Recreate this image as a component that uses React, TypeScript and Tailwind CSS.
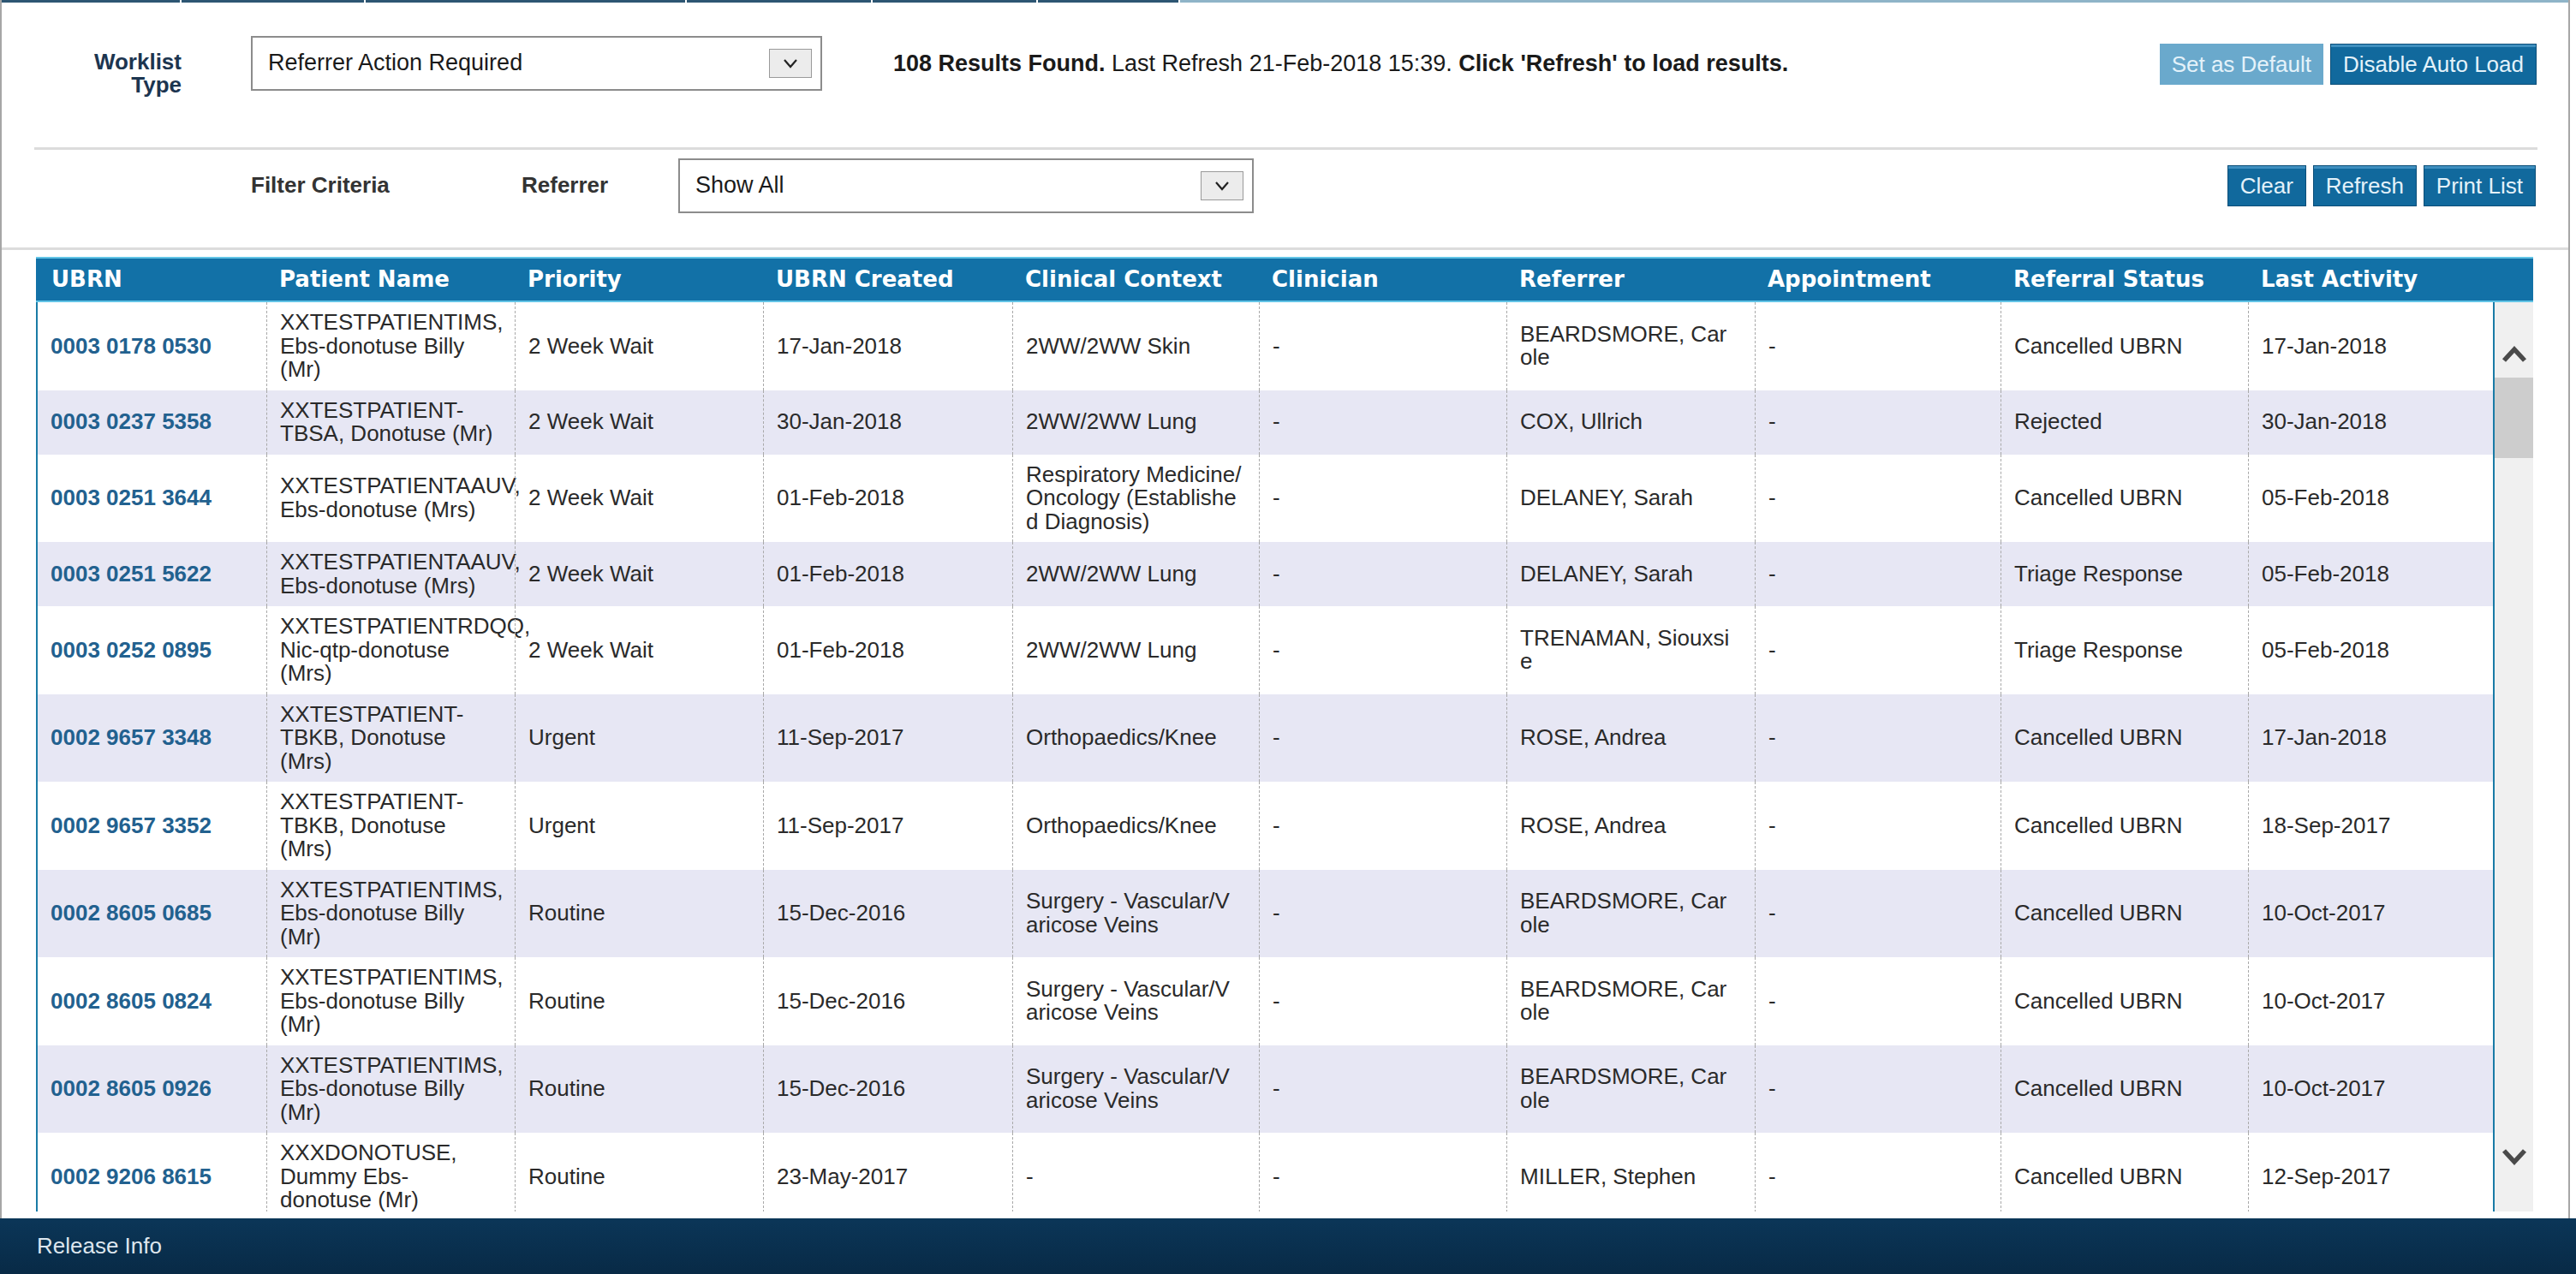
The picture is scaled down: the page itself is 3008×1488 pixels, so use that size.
import React from "react";

type Row = {
  ubrn: string;
  patient: string[];
  priority: string;
  created: string;
  context: string[];
  clinician: string;
  referrer: string[];
  appt: string;
  status: string;
  last: string;
};

const IMS = ["XXTESTPATIENTIMS,", "Ebs-donotuse Billy", "(Mr)"];
const TBKB = ["XXTESTPATIENT-", "TBKB, Donotuse", "(Mrs)"];
const AAUV = ["XXTESTPATIENTAAUV,", "Ebs-donotuse (Mrs)"];
const BEARD = ["BEARDSMORE, Car", "ole"];
const VASC = ["Surgery - Vascular/V", "aricose Veins"];

const rows: Row[] = [
  { ubrn: "0003 0178 0530", patient: IMS, priority: "2 Week Wait", created: "17-Jan-2018", context: ["2WW/2WW Skin"], clinician: "-", referrer: BEARD, appt: "-", status: "Cancelled UBRN", last: "17-Jan-2018" },
  { ubrn: "0003 0237 5358", patient: ["XXTESTPATIENT-", "TBSA, Donotuse (Mr)"], priority: "2 Week Wait", created: "30-Jan-2018", context: ["2WW/2WW Lung"], clinician: "-", referrer: ["COX, Ullrich"], appt: "-", status: "Rejected", last: "30-Jan-2018" },
  { ubrn: "0003 0251 3644", patient: AAUV, priority: "2 Week Wait", created: "01-Feb-2018", context: ["Respiratory Medicine/", "Oncology (Establishe", "d Diagnosis)"], clinician: "-", referrer: ["DELANEY, Sarah"], appt: "-", status: "Cancelled UBRN", last: "05-Feb-2018" },
  { ubrn: "0003 0251 5622", patient: AAUV, priority: "2 Week Wait", created: "01-Feb-2018", context: ["2WW/2WW Lung"], clinician: "-", referrer: ["DELANEY, Sarah"], appt: "-", status: "Triage Response", last: "05-Feb-2018" },
  { ubrn: "0003 0252 0895", patient: ["XXTESTPATIENTRDQQ,", "Nic-qtp-donotuse", "(Mrs)"], priority: "2 Week Wait", created: "01-Feb-2018", context: ["2WW/2WW Lung"], clinician: "-", referrer: ["TRENAMAN, Siouxsi", "e"], appt: "-", status: "Triage Response", last: "05-Feb-2018" },
  { ubrn: "0002 9657 3348", patient: TBKB, priority: "Urgent", created: "11-Sep-2017", context: ["Orthopaedics/Knee"], clinician: "-", referrer: ["ROSE, Andrea"], appt: "-", status: "Cancelled UBRN", last: "17-Jan-2018" },
  { ubrn: "0002 9657 3352", patient: TBKB, priority: "Urgent", created: "11-Sep-2017", context: ["Orthopaedics/Knee"], clinician: "-", referrer: ["ROSE, Andrea"], appt: "-", status: "Cancelled UBRN", last: "18-Sep-2017" },
  { ubrn: "0002 8605 0685", patient: IMS, priority: "Routine", created: "15-Dec-2016", context: VASC, clinician: "-", referrer: BEARD, appt: "-", status: "Cancelled UBRN", last: "10-Oct-2017" },
  { ubrn: "0002 8605 0824", patient: IMS, priority: "Routine", created: "15-Dec-2016", context: VASC, clinician: "-", referrer: BEARD, appt: "-", status: "Cancelled UBRN", last: "10-Oct-2017" },
  { ubrn: "0002 8605 0926", patient: IMS, priority: "Routine", created: "15-Dec-2016", context: VASC, clinician: "-", referrer: BEARD, appt: "-", status: "Cancelled UBRN", last: "10-Oct-2017" },
  { ubrn: "0002 9206 8615", patient: ["XXXDONOTUSE,", "Dummy Ebs-", "donotuse (Mr)"], priority: "Routine", created: "23-May-2017", context: ["-"], clinician: "-", referrer: ["MILLER, Stephen"], appt: "-", status: "Cancelled UBRN", last: "12-Sep-2017" },
];

const headers = [
  "UBRN",
  "Patient Name",
  "Priority",
  "UBRN Created",
  "Clinical Context",
  "Clinician",
  "Referrer",
  "Appointment",
  "Referral Status",
  "Last Activity",
];

function Chevron({ up }: { up?: boolean }) {
  return (
    <svg width="32" height="22" viewBox="0 0 32 22">
      <path
        d={up ? "M4 19 L16 6 L28 19" : "M4 3 L16 16 L28 3"}
        stroke="#4a4a4a"
        strokeWidth="5.5"
        fill="none"
      />
    </svg>
  );
}

function SelectBox({ value, width }: { value: string; width: string }) {
  return (
    <div
      className={`flex h-[64px] ${width} items-center justify-between border-2 border-[#8c8c8c] bg-white pl-[18px] pr-[10px]`}
    >
      <span className="text-[27px] text-[#1a1a1a]">{value}</span>
      <div className="flex h-[34px] w-[50px] items-center justify-center border border-[#9a9a9a] bg-[#ececec]">
        <svg width="20" height="14" viewBox="0 0 20 14">
          <path d="M3 3 L10 11 L17 3" stroke="#222" strokeWidth="2.2" fill="none" />
        </svg>
      </div>
    </div>
  );
}

function Btn({ label, light }: { label: string; light?: boolean }) {
  return (
    <button
      className={`h-[48px] px-[14px] text-[26px] leading-none text-[#e4f2fa] ${
        light
          ? "bg-[#6aa9cc]"
          : "border border-[#0b4e78] bg-[#11699d] shadow-[inset_0_3px_0_#3f8fbf]"
      }`}
    >
      {label}
    </button>
  );
}

function Lines({ lines }: { lines: string[] }) {
  return (
    <>
      {lines.map((l, i) => (
        <div key={i} className="whitespace-nowrap">
          {l}
        </div>
      ))}
    </>
  );
}

function Cell({ first, children }: { first?: boolean; children: React.ReactNode }) {
  return (
    <div
      className={`flex flex-col justify-center py-[10px] pl-[15px] pr-[4px] ${
        first ? "" : "border-l border-dashed border-[#a9a9a9]"
      }`}
    >
      {children}
    </div>
  );
}

export default function App() {
  return (
    <div className="flex h-[1488px] w-full flex-col overflow-hidden bg-white font-['Liberation_Sans',Arial,sans-serif] text-[26px] leading-[27.5px] text-[#2a2a2a]">
      {/* Main bordered area */}
      <div className="flex h-[1423px] w-[3001px] flex-col border-x-2 border-[#a6a6a6]">
        {/* tab remnants */}
        <div className="flex h-[3px] gap-[2px]">
          <div className="w-[208px] bg-[#2d5673]" />
          <div className="w-[213px] bg-[#2d5673]" />
          <div className="w-[373px] bg-[#2d5673]" />
          <div className="w-[215px] bg-[#2d5673]" />
          <div className="w-[191px] bg-[#2d5673]" />
          <div className="w-[164px] bg-[#2d5673]" />
          <div className="flex-1 bg-[#8fb4c8]" />
        </div>

        {/* Worklist row */}
        <div className="flex h-[169px] items-start">
          <div className="mt-[56px] w-[210px] text-right font-bold leading-[27px] text-[#1c3550]">
            <div>Worklist</div>
            <div>Type</div>
          </div>
          <div className="ml-[81px] mt-[39px]">
            <SelectBox value="Referrer Action Required" width="w-[667px]" />
          </div>
          <div className="ml-[83px] mt-[58px] whitespace-nowrap text-[27px] text-[#1a1a1a]">
            <span className="font-bold">108 Results Found.</span> Last Refresh 21-Feb-2018 15:39.{" "}
            <span className="font-bold">Click 'Refresh' to load results.</span>
          </div>
          <div className="ml-auto mr-[37px] mt-[48px] flex gap-[8px]">
            <Btn label="Set as Default" light />
            <Btn label="Disable Auto Load" />
          </div>
        </div>

        <div className="ml-[38px] mr-[36px] h-[3px] bg-[#dcdcdc]" />

        {/* Filter row */}
        <div className="h-[114px] pt-[10px]">
          <div className="flex h-[64px] items-center">
            <div className="ml-[291px] w-[316px] font-bold text-[#333]">Filter Criteria</div>
            <div className="w-[183px] font-bold text-[#333]">Referrer</div>
            <SelectBox value="Show All" width="w-[672px]" />
            <div className="ml-auto mr-[38px] flex gap-[8px]">
              <Btn label="Clear" />
              <Btn label="Refresh" />
              <Btn label="Print List" />
            </div>
          </div>
        </div>

        <div className="h-[3px] bg-[#dcdcdc]" />

        {/* Worklist table */}
        <div className="ml-[40px] mt-[8px] w-[2916px]">
          <div className="grid h-[53px] grid-cols-[269px_290px_290px_291px_288px_289px_290px_287px_289px_333px] border-y-2 border-[#62c4e6] bg-[#1271a7] font-['DejaVu_Sans',Verdana,sans-serif] font-bold text-white">
            {headers.map((h, i) => (
              <div
                key={h}
                className={`flex items-center whitespace-nowrap ${i === 0 ? "pl-[18px]" : "pl-[15px]"}`}
              >
                {h}
              </div>
            ))}
          </div>

          <div className="flex h-[1062px]">
            <div className="flex-1 overflow-hidden border-x-2 border-[#1a7ba6]">
              {rows.map((r, i) => (
                <div
                  key={r.ubrn}
                  className={`grid grid-cols-[267px_290px_290px_291px_288px_289px_290px_287px_289px_286px] ${
                    i % 2 === 1 ? "bg-[#e7e7f4]" : "bg-white"
                  }`}
                >
                  <Cell first>
                    <div className="whitespace-nowrap font-bold text-[#22618f]">{r.ubrn}</div>
                  </Cell>
                  <Cell>
                    <Lines lines={r.patient} />
                  </Cell>
                  <Cell>
                    <div className="relative whitespace-nowrap">{r.priority}</div>
                  </Cell>
                  <Cell>
                    <div className="whitespace-nowrap">{r.created}</div>
                  </Cell>
                  <Cell>
                    <Lines lines={r.context} />
                  </Cell>
                  <Cell>
                    <div>{r.clinician}</div>
                  </Cell>
                  <Cell>
                    <Lines lines={r.referrer} />
                  </Cell>
                  <Cell>
                    <div>{r.appt}</div>
                  </Cell>
                  <Cell>
                    <div className="whitespace-nowrap">{r.status}</div>
                  </Cell>
                  <Cell>
                    <div className="whitespace-nowrap">{r.last}</div>
                  </Cell>
                </div>
              ))}
            </div>

            {/* scrollbar */}
            <div className="flex w-[45px] flex-col bg-[#f0f0f0]">
              <div className="flex h-[88px] items-end justify-center pb-[17px]">
                <Chevron up />
              </div>
              <div className="h-[94px] bg-[#cdcdcd]" />
              <div className="flex-1" />
              <div className="flex h-[120px] items-start justify-center pt-[46px]">
                <Chevron />
              </div>
            </div>
          </div>
        </div>
      </div>

      {/* Footer */}
      <div className="flex h-[65px] items-center bg-gradient-to-b from-[#0b3658] to-[#082a46] pl-[43px] text-[#dde6ee]">
        Release Info
      </div>
    </div>
  );
}
